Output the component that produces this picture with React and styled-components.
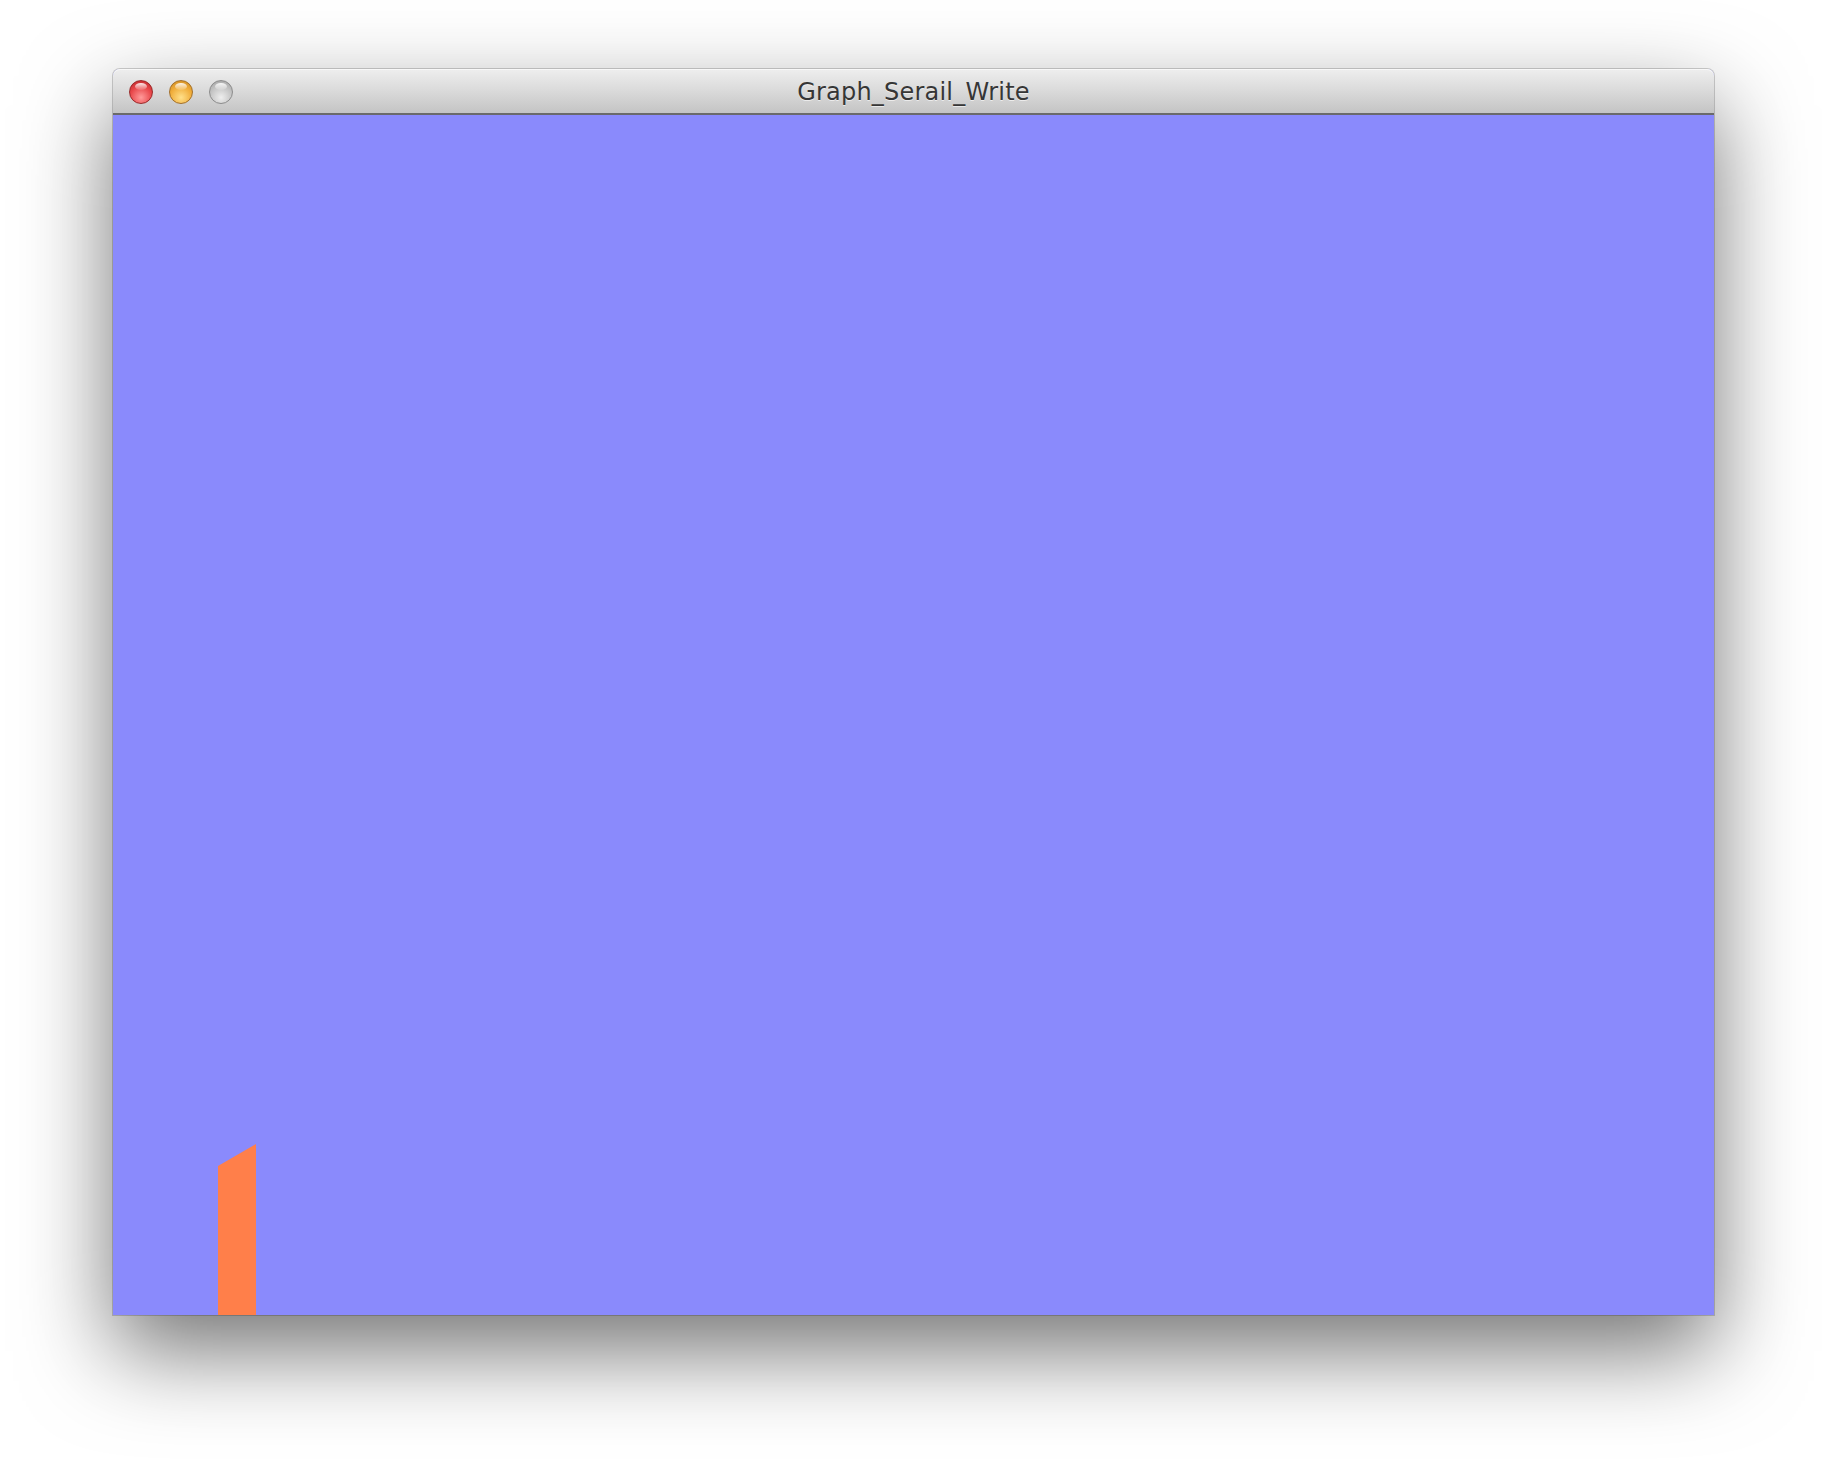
import React from 'react';
import styled, { createGlobalStyle } from 'styled-components';

const GlobalStyle = createGlobalStyle`
  html, body {
    margin: 0;
    padding: 0;
    background: #ffffff;
  }
`;

const Desktop = styled.div`
  width: 1828px;
  height: 1472px;
  padding: 69px 0 0 113px;
  box-sizing: border-box;
  overflow: hidden;
`;

const Window = styled.div`
  width: 1601px;
  display: flex;
  flex-direction: column;
  border-radius: 7px 7px 0 0;
  box-shadow: 0 36px 90px rgba(0, 0, 0, 0.55), 0 0 0 1px rgba(0, 0, 0, 0.18);
  background: #8a8afc;
`;

const TitleBar = styled.div`
  position: relative;
  height: 44px;
  display: flex;
  align-items: center;
  justify-content: center;
  border-radius: 7px 7px 0 0;
  background: linear-gradient(to bottom, #eeeeee 0%, #dcdcdc 45%, #c4c4c4 100%);
  border-bottom: 2px solid #6a6a6a;
  box-shadow: inset 0 1px 0 #f8f8f8;
`;

const Lights = styled.div`
  position: absolute;
  left: 16px;
  top: 11px;
  display: flex;
  gap: 16px;
`;

const Light = styled.div`
  width: 24px;
  height: 24px;
  border-radius: 50%;
  box-sizing: border-box;
  border: 1px solid ${p => p.edge};
  background: radial-gradient(circle at 50% 75%, ${p => p.glow} 0%, ${p => p.base} 55%, ${p => p.dark} 100%);
  position: relative;
  &::after {
    content: '';
    position: absolute;
    left: 5px;
    top: 2px;
    width: 12px;
    height: 7px;
    border-radius: 50%;
    background: linear-gradient(to bottom, rgba(255,255,255,0.9), rgba(255,255,255,0.1));
  }
`;

const Title = styled.div`
  font-family: "DejaVu Sans", "Liberation Sans", sans-serif;
  font-size: 24px;
  color: #363636;
  letter-spacing: 0.2px;
  text-shadow: 0 1px 0 rgba(255, 255, 255, 0.6);
  margin-top: 2px;
`;

const Canvas = styled.svg`
  display: block;
  width: 1601px;
  height: 1200px;
  background: #8a8afc;
`;

export default function App() {
  return (
    <>
      <GlobalStyle />
      <Desktop>
        <Window>
          <TitleBar>
            <Lights>
              <Light edge="#9a2a2a" base="#e8474a" glow="#ff9a9a" dark="#b82226" />
              <Light edge="#a3702a" base="#f0ad3a" glow="#ffe08a" dark="#c9861c" />
              <Light edge="#8c8c8c" base="#c4c4c4" glow="#eeeeee" dark="#9e9e9e" />
            </Lights>
            <Title>Graph_Serail_Write</Title>
          </TitleBar>
          <Canvas viewBox="0 0 1601 1200">
            <polygon points="105,1051 143,1029 143,1200 105,1200" fill="#ff7f4a" />
          </Canvas>
        </Window>
      </Desktop>
    </>
  );
}
